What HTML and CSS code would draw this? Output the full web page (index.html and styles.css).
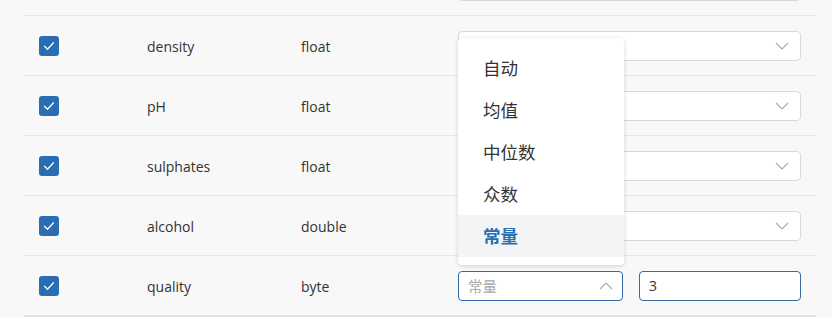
FILE: index.html
```html
<!DOCTYPE html>
<html lang="zh">
<head>
<meta charset="utf-8">
<link rel="stylesheet" href="styles.css">
</head>
<body>
<div class="page">
  <div class="table">
    <div class="row">
      <div class="cell cb-cell"></div>
      <div class="cell"></div>
      <div class="cell"></div>
      <div class="cell strat"><div class="select"><span class="val"></span><svg class="chev" viewBox="0 0 14 8"><path d="M1 1l6 6 6-6"/></svg></div></div>
    </div>
    <div class="row">
      <div class="cell cb-cell"><span class="cb"><svg viewBox="0 0 20 20"><path d="M5.5 10.2l3 3 6-6.4"/></svg></span></div>
      <div class="cell txt">density</div>
      <div class="cell txt">float</div>
      <div class="cell strat"><div class="select"><span class="val"></span><svg class="chev" viewBox="0 0 14 8"><path d="M1 1l6 6 6-6"/></svg></div></div>
    </div>
    <div class="row">
      <div class="cell cb-cell"><span class="cb"><svg viewBox="0 0 20 20"><path d="M5.5 10.2l3 3 6-6.4"/></svg></span></div>
      <div class="cell txt">pH</div>
      <div class="cell txt">float</div>
      <div class="cell strat"><div class="select"><span class="val"></span><svg class="chev" viewBox="0 0 14 8"><path d="M1 1l6 6 6-6"/></svg></div></div>
    </div>
    <div class="row">
      <div class="cell cb-cell"><span class="cb"><svg viewBox="0 0 20 20"><path d="M5.5 10.2l3 3 6-6.4"/></svg></span></div>
      <div class="cell txt">sulphates</div>
      <div class="cell txt">float</div>
      <div class="cell strat"><div class="select"><span class="val"></span><svg class="chev" viewBox="0 0 14 8"><path d="M1 1l6 6 6-6"/></svg></div></div>
    </div>
    <div class="row">
      <div class="cell cb-cell"><span class="cb"><svg viewBox="0 0 20 20"><path d="M5.5 10.2l3 3 6-6.4"/></svg></span></div>
      <div class="cell txt">alcohol</div>
      <div class="cell txt">double</div>
      <div class="cell strat"><div class="select"><span class="val"></span><svg class="chev" viewBox="0 0 14 8"><path d="M1 1l6 6 6-6"/></svg></div></div>
    </div>
    <div class="row last">
      <div class="cell cb-cell"><span class="cb"><svg viewBox="0 0 20 20"><path d="M5.5 10.2l3 3 6-6.4"/></svg></span></div>
      <div class="cell txt">quality</div>
      <div class="cell txt">byte</div>
      <div class="cell strat split">
        <div class="sel-wrap">
          <div class="select focused"><span class="ph">常量</span><svg class="chev" viewBox="0 0 14 8"><path d="M1 7l6-6 6 6"/></svg></div>
          <ul class="menu">
            <li>自动</li>
            <li>均值</li>
            <li>中位数</li>
            <li>众数</li>
            <li class="active">常量</li>
          </ul>
        </div>
        <div class="input">3</div>
      </div>
    </div>
  </div>
</div>
</body>
</html>
```

FILE: styles.css
```css
* { box-sizing: border-box; }
html, body { margin: 0; padding: 0; background: #ffffff; }
body {
  font-family: "Open Sans", "Noto Sans", "Noto Sans CJK SC", sans-serif;
  color: #333333;
  font-size: 14px;
}
.page {
  background: #f8f8f8;
  height: 317px;
  overflow: hidden;
}
.table {
  margin-top: -44px;
  margin-left: 24px;
  width: 792px;
}
.row {
  display: grid;
  grid-template-columns: 123px 154px 157px 1fr;
  align-items: center;
  height: 60px;
  border-bottom: 1px solid #e7e7e7;
  padding-right: 15px;
}
.row.last {
  height: 61px;
  border-bottom: 2px solid #e3e3e3;
}
.cell { line-height: 20px; }
.txt { padding-top: 2px; }
.cb-cell { padding-left: 15px; display: flex; align-items: center; }
.cb {
  width: 20px;
  height: 20px;
  border-radius: 3px;
  background: #2a6db2;
  display: block;
}
.cb svg { width: 20px; height: 20px; display: block; }
.cb path { fill: none; stroke: #ffffff; stroke-width: 1.3; stroke-linecap: round; stroke-linejoin: round; }
.strat { display: flex; }
.select {
  flex: 1;
  height: 30px;
  border: 1px solid #d9d9d9;
  border-radius: 4px;
  background: #ffffff;
  display: flex;
  align-items: center;
  justify-content: space-between;
  padding: 0 11px 0 9px;
}
.chev { width: 14px; height: 8px; display: block; }
.chev path { fill: none; stroke: #a8a8a8; stroke-width: 1.1; }
.split { gap: 16px; }
.sel-wrap { position: relative; flex: 0 0 165px; display: flex; }
.select.focused { border-color: #2f6aa6; padding-right: 9px; }
.ph {
  color: #a9a9a9;
  font-family: "Noto Sans CJK SC", sans-serif;
  font-size: 14.5px;
}
.input {
  flex: 1;
  height: 30px;
  border: 1px solid #3a6b9e;
  border-radius: 4px;
  background: #ffffff;
  display: flex;
  align-items: center;
  padding-left: 9px;
  color: #333333;
}
.menu {
  position: absolute;
  left: 0;
  bottom: 36px;
  width: 166px;
  margin: 0;
  padding: 9px 0 8px;
  list-style: none;
  background: #ffffff;
  border-radius: 4px;
  box-shadow: 0 1px 4px rgba(0, 0, 0, 0.16);
  z-index: 5;
}
.menu li {
  height: 42px;
  display: flex;
  align-items: center;
  padding-left: 25px;
  font-family: "Noto Sans CJK SC", sans-serif;
  font-size: 17.5px;
  color: #333333;
}
.menu li.active {
  background: #f2f4f5;
  color: #2a6db2;
  font-weight: 700;
}
```
